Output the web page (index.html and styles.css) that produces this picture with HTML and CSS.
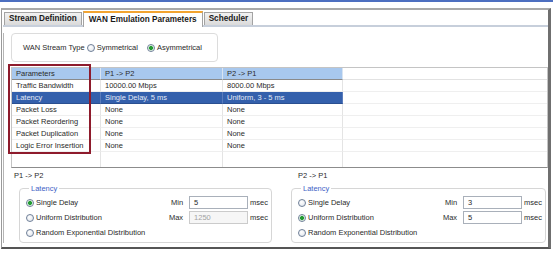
FILE: index.html
```html
<!DOCTYPE html>
<html lang="en">
<head>
    <meta charset="UTF-8">
    <title>WAN Emulation Parameters</title>
    <link rel="stylesheet" href="styles.css">
</head>
<body>
    <div class="topline"></div>
    <div class="window">
        <div class="tabs">
            <div class="tab">Stream Definition</div>
            <div class="tab active">WAN Emulation Parameters</div>
            <div class="tab">Scheduler</div>
        </div>
        <div class="panel">
            <div class="stream-type">
                <span class="caption">WAN Stream Type</span>
                <span class="radio"><span class="dot"></span>Symmetrical</span>
                <span class="radio gap"><span class="dot on"></span>Asymmetrical</span>
            </div>

            <div class="grid-wrap">
                <table class="params">
                    <colgroup>
                        <col class="c1"><col class="c2"><col class="c3"><col>
                    </colgroup>
                    <tr class="head">
                        <th>Parameters</th><th>P1 -&gt; P2</th><th>P2 -&gt; P1</th><th class="blank"></th>
                    </tr>
                    <tr><td>Traffic Bandwidth</td><td>10000.00 Mbps</td><td>8000.00 Mbps</td><td></td></tr>
                    <tr class="selected"><td>Latency</td><td>Single Delay, 5 ms</td><td>Uniform, 3 - 5 ms</td><td></td></tr>
                    <tr><td>Packet Loss</td><td>None</td><td>None</td><td></td></tr>
                    <tr><td>Packet Reordering</td><td>None</td><td>None</td><td></td></tr>
                    <tr><td>Packet Duplication</td><td>None</td><td>None</td><td></td></tr>
                    <tr><td>Logic Error Insertion</td><td>None</td><td>None</td><td></td></tr>
                    <tr class="filler"><td></td><td></td><td></td><td></td></tr>
                </table>
                <div class="highlight"></div>
            </div>

            <div class="directions">
                <div class="dir left">
                    <div class="dir-title">P1 -&gt; P2</div>
                    <fieldset class="group">
                        <legend>Latency</legend>
                        <div class="group-grid">
                            <span class="radio"><span class="dot on"></span>Single Delay</span>
                            <span class="lbl">Min</span>
                            <span class="field">5</span>
                            <span class="unit">msec</span>
                            <span class="radio"><span class="dot"></span>Uniform Distribution</span>
                            <span class="lbl">Max</span>
                            <span class="field disabled">1250</span>
                            <span class="unit">msec</span>
                            <span class="radio"><span class="dot"></span>Random Exponential Distribution</span>
                        </div>
                    </fieldset>
                </div>
                <div class="dir right">
                    <div class="dir-title">P2 -&gt; P1</div>
                    <fieldset class="group">
                        <legend>Latency</legend>
                        <div class="group-grid">
                            <span class="radio"><span class="dot"></span>Single Delay</span>
                            <span class="lbl">Min</span>
                            <span class="field">3</span>
                            <span class="unit">msec</span>
                            <span class="radio"><span class="dot on"></span>Uniform Distribution</span>
                            <span class="lbl">Max</span>
                            <span class="field">5</span>
                            <span class="unit">msec</span>
                            <span class="radio"><span class="dot"></span>Random Exponential Distribution</span>
                        </div>
                    </fieldset>
                </div>
            </div>
        </div>
    </div>
</body>
</html>
```

FILE: styles.css
```css
body {
    margin: 0;
    width: 553px;
    height: 254px;
    overflow: hidden;
    background: #fff;
    font-family: "Liberation Sans", Arial, sans-serif;
    font-size: 7.5px;
    color: #2a2a2a;
}

.topline {
    height: 2px;
    background: #4d6fc0;
}

.window {
    margin: 6px 2px 0 1px;
    height: 237px;
    padding-left: 1px;
    border-top: 2px solid #a9a9a9;
    border-left: 1px solid #9a9a9a;
    border-right: 3px solid #6f6f6f;
    border-bottom: 2px solid #555;
}

/* tabs */
.tabs {
    display: flex;
    align-items: flex-end;
    height: 15px;
    padding-left: 1px;
    border-bottom: 2px solid #c7cfdb;
}

.tab {
    height: 12px;
    line-height: 12px;
    padding: 0 4px;
    margin-right: 1px;
    font-size: 8.2px;
    font-weight: bold;
    color: #1a1a1a;
    background: linear-gradient(#f2f2f2, #dadada);
    border: 1px solid #a3a3a3;
    border-bottom: none;
}

.tab.active {
    height: 14px;
    line-height: 13px;
    margin-bottom: -2px;
    padding: 0 5px;
    background: #fff;
    border-top: 2px solid #f2a431;
}

.panel {
    height: 210px;
    border-left: 1px solid #b5b5b5;
}

/* stream type box */
.stream-type {
    display: flex;
    align-items: center;
    width: 194px;
    height: 27px;
    margin: 6px 0 0 7px;
    padding-left: 11px;
    border: 1px solid #dcdcdc;
    border-radius: 4px;
}

.caption {
    margin-right: 2px;
}

.radio {
    display: flex;
    align-items: center;
    gap: 2px;
    white-space: nowrap;
    color: #2a2a2a;
}

.radio.gap {
    margin-left: 9px;
}

.dot {
    width: 6px;
    height: 6px;
    border-radius: 50%;
    border: 1px solid #6f7f98;
    background: radial-gradient(circle at 40% 35%, #fff, #dde2ea);
}

.dot.on {
    background: radial-gradient(circle, #239a34 0 1.6px, #b9e4bd 2.2px, #fff 3px);
}

/* parameters table */
.grid-wrap {
    position: relative;
    margin: 5px 0 0 7px;
}

.params {
    width: 537px;
    table-layout: fixed;
    border-collapse: separate;
    border-spacing: 0;
    border: 1px solid #c4c4c4;
    border-bottom-color: #8c8c8c;
    color: #2a2a2a;
}

.params col.c1 { width: 89px; }
.params col.c2 { width: 122px; }
.params col.c3 { width: 120px; }

.params th,
.params td {
    height: 11px;
    line-height: 11px;
    padding: 0 0 0 4px;
    text-align: left;
    font-weight: normal;
    white-space: nowrap;
    overflow: hidden;
    border-bottom: 1px solid #efefef;
    border-right: 1px solid #e4e4e4;
}

.params td:last-child,
.params th:last-child {
    border-right: none;
}

.params .head th {
    background: #a8c8ee;
    border-bottom-color: #8a8a8a;
    border-right-color: #d8e4f2;
}

.params .head th.blank {
    background: #fff;
    border-bottom-color: #e2e2e2;
}

.params .selected td {
    background: #3460ac;
    color: #e2eaf7;
    border-bottom-color: #2a4f90;
    border-right-color: #5a7cbc;
}

.params .selected td:last-child {
    background: #fff;
    border-bottom-color: #efefef;
}

.params .filler td {
    height: 15px;
    border-bottom: none;
}

.highlight {
    position: absolute;
    top: -3px;
    left: -3px;
    width: 83px;
    height: 90px;
    box-sizing: border-box;
    border: 2px solid #8e1b2c;
}

/* direction settings */
.directions {
    display: flex;
    padding-left: 10px;
}

.dir-title {
    margin-top: 3px;
    line-height: 10px;
}

.dir.left {
    width: 258px;
}

.dir.left .group {
    margin-left: 5px;
}

.dir.right {
    flex: 1;
    margin: 0 2px 0 19px;
}

.dir.right .dir-title {
    padding-left: 7px;
}

.group {
    margin: 3px 0 0;
    padding: 2px 3px 2px 6px;
    border: 1px solid #d6d6d6;
    border-radius: 4px;
}

.group legend {
    margin-left: 3px;
    padding: 0 2px;
    line-height: 9px;
    color: #3f62c6;
}

.group-grid {
    display: grid;
    grid-template-columns: 1fr auto 59px auto;
    grid-auto-rows: 15px;
    align-items: center;
}

.lbl {
    margin-right: 6px;
    text-align: right;
}

.field {
    height: 11px;
    line-height: 11px;
    padding-left: 4px;
    border: 1px solid #a9b0ba;
    background: #fff;
}

.field.disabled {
    color: #a2a2a2;
    background: #f6f6f6;
    border-color: #cbcbcb;
}

.unit {
    margin-left: 2px;
}
```
